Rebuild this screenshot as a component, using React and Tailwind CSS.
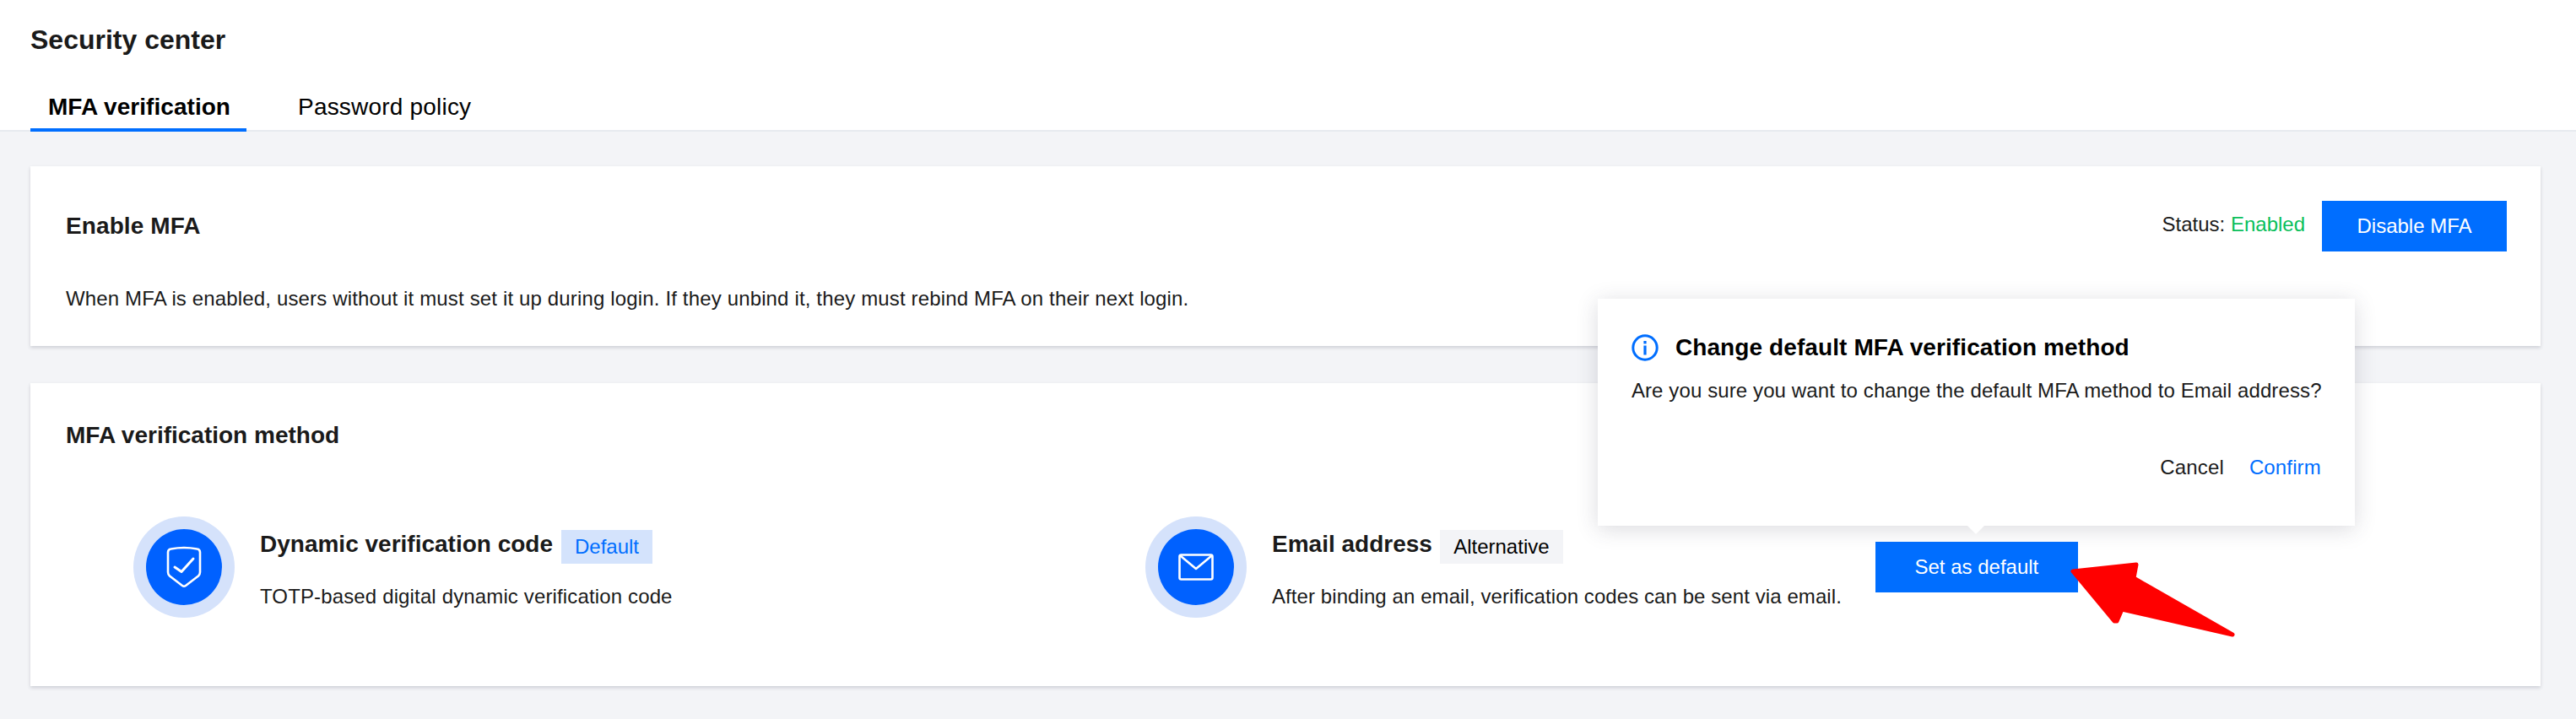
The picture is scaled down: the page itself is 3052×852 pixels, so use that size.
const FONT = "font-['Liberation_Sans',Arial,sans-serif]";

function ShieldIcon() {
  return (
    <svg width="44" height="50" viewBox="0 0 44 50" fill="none" stroke="#fff" strokeWidth="2.6" strokeLinecap="round" strokeLinejoin="round">
      <path d="M3 7.5 Q3 4 6.5 3.5 Q22 0.5 37.5 3.5 Q41 4 41 7.5 V31 Q41 33.5 39 35.5 L24 47 Q22 48.5 20 47 L5 35.5 Q3 33.5 3 31 Z" />
      <path d="M11 25 L19 30.5 L33 15" strokeWidth="3" />
    </svg>
  );
}

function MailIcon() {
  return (
    <svg width="42" height="32" viewBox="0 0 42 32" fill="none" stroke="#fff" strokeWidth="2.6" strokeLinecap="round" strokeLinejoin="round">
      <rect x="1.5" y="1.5" width="39" height="29" rx="2" />
      <path d="M3 3 L21 18 L39 3" />
    </svg>
  );
}

function InfoIcon() {
  return (
    <svg width="32" height="32" viewBox="0 0 32 32" fill="none">
      <circle cx="16" cy="16" r="14.2" stroke="#006eff" strokeWidth="3" />
      <rect x="14.4" y="8" width="3.2" height="3.4" fill="#006eff" />
      <rect x="14.4" y="13.5" width="3.2" height="11" fill="#006eff" />
    </svg>
  );
}

function MethodIcon({ children }) {
  return (
    <div className="w-[120px] h-[120px] rounded-full bg-[#d5e2fb] flex items-center justify-center shrink-0">
      <div className="w-[90px] h-[90px] rounded-full bg-[#0061ff] flex items-center justify-center">
        {children}
      </div>
    </div>
  );
}

function Card({ className, children }) {
  return (
    <div className={`bg-white shadow-[0_2px_4px_rgba(54,58,80,0.2)] ${className}`}>{children}</div>
  );
}

export default function App() {
  return (
    <div className={`${FONT} relative w-[3052px] h-[852px] overflow-hidden bg-[#f3f4f7] text-[#1a1a1a]`}>
      <header className="h-[156px] bg-white border-b-2 border-[#e7eaef] px-[36px]">
        <h1 className="pt-[29px] text-[32px] leading-[36px] font-bold">Security center</h1>
        <nav className="mt-[33px] flex h-[58px] text-[28px] text-black">
          <div className="w-[256px] h-[58px] pl-[21px] pt-[11px] leading-[36px] font-bold tracking-[0.05px] border-b-[4px] border-[#006eff]">
            MFA verification
          </div>
          <div className="ml-[61px] pt-[11px] leading-[36px] tracking-[0.2px]">Password policy</div>
        </nav>
      </header>

      <main className="pl-[36px] pr-[42px] pt-[41px] flex flex-col gap-[44px]">
        <Card className="h-[213px] px-[42px] relative">
          <div className="flex items-start justify-between pt-[41px]">
            <h2 className="pt-[12px] text-[28px] leading-[36px] font-bold tracking-[0.1px]">Enable MFA</h2>
            <div className="flex items-start gap-[20px] mr-[-2px]">
              <span className="pt-[14px] text-[24px] leading-[28px]">
                Status: <span className="text-[#0abf5b]">Enabled</span>
              </span>
              <button className="w-[219px] h-[60px] bg-[#006eff] text-white text-[24px]">Disable MFA</button>
            </div>
          </div>
          <p className="mt-[42px] text-[24px] leading-[28px] tracking-[0.15px]">
            When MFA is enabled, users without it must set it up during login. If they unbind it, they must rebind MFA on their next login.
          </p>
        </Card>

        <Card className="h-[359px] px-[42px]">
          <h2 className="pt-[44px] text-[28px] leading-[36px] font-bold">MFA verification method</h2>
          <div className="mt-[78px] pl-[80px] grid grid-cols-[1199px_1fr]">
            <div className="flex items-center gap-[30px]">
              <MethodIcon><ShieldIcon /></MethodIcon>
              <div className="pt-[4px]">
                <div className="flex items-start gap-[10px]">
                  <span className="text-[28px] leading-[36px] font-bold">Dynamic verification code</span>
                  <span className="mt-[1px] h-[40px] w-[108px] flex items-center justify-center bg-[#d4e3fc] text-[#006eff] text-[24px]">Default</span>
                </div>
                <p className="mt-[25px] text-[24px] leading-[28px] tracking-[0.14px]">TOTP-based digital dynamic verification code</p>
              </div>
            </div>
            <div className="flex items-center gap-[30px]">
              <MethodIcon><MailIcon /></MethodIcon>
              <div className="pt-[4px]">
                <div className="flex items-start gap-[9px]">
                  <span className="text-[28px] leading-[36px] font-bold">Email address</span>
                  <span className="mt-[1px] h-[40px] w-[146px] flex items-center justify-center bg-[#f3f4f7] text-black text-[24px]">Alternative</span>
                </div>
                <p className="mt-[25px] text-[24px] leading-[28px] tracking-[0.08px]">After binding an email, verification codes can be sent via email.</p>
              </div>
              <div className="relative ml-[10px]">
                <button className="block w-[240px] h-[60px] bg-[#006eff] text-white text-[24px]">Set as default</button>
                <div className="absolute left-[-329px] bottom-[79px] w-[897px] h-[269px] bg-white shadow-[0_4px_24px_rgba(54,58,80,0.18)] px-[40px] pt-[42px] text-black">
                  <div className="flex items-center gap-[20px] h-[32px]">
                    <InfoIcon />
                    <span className="text-[28px] leading-[36px] font-bold tracking-[0.1px]">Change default MFA verification method</span>
                  </div>
                  <p className="mt-[21px] text-[24px] leading-[28px] tracking-[0.11px] whitespace-nowrap text-[#1a1a1a]">
                    Are you sure you want to change the default MFA method to Email address?
                  </p>
                  <div className="mt-[63px] flex justify-end gap-[30px] text-[24px] leading-[28px] tracking-[0.14px]">
                    <span className="text-[#1a1a1a]">Cancel</span>
                    <span className="text-[#006eff]">Confirm</span>
                  </div>
                  <div className="absolute left-[438px] bottom-[-10px] w-0 h-0 border-x-[10px] border-x-transparent border-t-[10px] border-t-white"></div>
                </div>
              </div>
            </div>
          </div>
        </Card>
      </main>

      {/* annotation arrow from the screenshot */}
      <svg className="absolute left-[2440px] top-[655px]" width="215" height="110" viewBox="2440 655 215 110">
        <path
          d="M2456 677 L2531 669 L2528 685 L2645 752 L2514 722 L2508 736 L2505 736 Z"
          fill="#ff0000"
          stroke="#ff0000"
          strokeWidth="5"
          strokeLinejoin="round"
        />
      </svg>
    </div>
  );
}
